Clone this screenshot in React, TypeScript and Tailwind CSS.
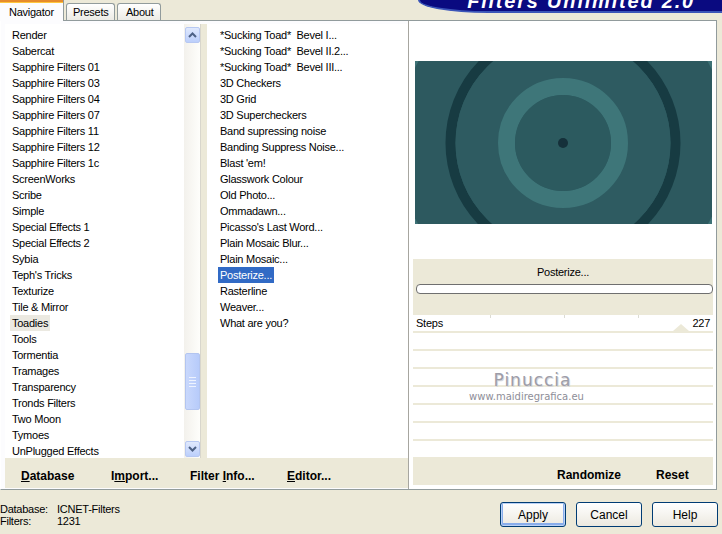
import React from "react";

const leftItems = [
  "Render",
  "Sabercat",
  "Sapphire Filters 01",
  "Sapphire Filters 03",
  "Sapphire Filters 04",
  "Sapphire Filters 07",
  "Sapphire Filters 11",
  "Sapphire Filters 12",
  "Sapphire Filters 1c",
  "ScreenWorks",
  "Scribe",
  "Simple",
  "Special Effects 1",
  "Special Effects 2",
  "Sybia",
  "Teph's Tricks",
  "Texturize",
  "Tile & Mirror",
  "Toadies",
  "Tools",
  "Tormentia",
  "Tramages",
  "Transparency",
  "Tronds Filters",
  "Two Moon",
  "Tymoes",
  "UnPlugged Effects",
];

const midItems = [
  "*Sucking Toad*  Bevel I...",
  "*Sucking Toad*  Bevel II.2...",
  "*Sucking Toad*  Bevel III...",
  "3D Checkers",
  "3D Grid",
  "3D Supercheckers",
  "Band supressing noise",
  "Banding Suppress Noise...",
  "Blast 'em!",
  "Glasswork Colour",
  "Old Photo...",
  "Ommadawn...",
  "Picasso's Last Word...",
  "Plain Mosaic Blur...",
  "Plain Mosaic...",
  "Posterize...",
  "Rasterline",
  "Weaver...",
  "What are you?",
];

function Chevron({ up }: { up: boolean }) {
  return (
    <svg width="9" height="6" viewBox="0 0 9 6">
      <path
        d={up ? "M1 5 L4.5 1.5 L8 5" : "M1 1 L4.5 4.5 L8 1"}
        fill="none"
        stroke="#4d6185"
        strokeWidth="2"
      />
    </svg>
  );
}

function ScrollBtn({ up }: { up: boolean }) {
  return (
    <div className="w-[15px] h-[16px] rounded-[2px] border border-[#b7c8f2] bg-gradient-to-b from-[#e0e9fd] to-[#bccffb] flex items-center justify-center">
      <Chevron up={up} />
    </div>
  );
}

function Preview() {
  return (
    <svg width="297" height="163" viewBox="0 0 297 163" className="block">
      <rect width="297" height="163" fill="#3e7276" />
      <circle cx="148" cy="82" r="166" fill="#2d595f" />
      <circle cx="148" cy="82" r="112.5" fill="none" stroke="#173b42" strokeWidth="10" />
      <circle cx="148" cy="82" r="107.5" fill="#2e5b61" />
      <circle cx="148" cy="82" r="56.5" fill="none" stroke="#3e7679" strokeWidth="17" />
      <circle cx="148" cy="82" r="48" fill="#2c5a5f" />
      <circle cx="148" cy="82" r="5" fill="#15303a" />
    </svg>
  );
}

export default function App() {
  const font = { fontFamily: '"Liberation Sans", Arial, sans-serif' };
  return (
    <div
      className="w-[722px] h-[534px] bg-[#ece9d8] overflow-hidden text-black text-[11px] tracking-[-0.25px] leading-[16px]"
      style={font}
    >
      {/* Tab strip */}
      <div className="h-[20px] flex items-start">
        <div className="relative z-10 w-[64px] h-[21px] bg-[#fcfcfe] border-r border-[#919b9c] flex flex-col">
          <div className="h-[2px] bg-[#e68b2c]" />
          <div className="h-[1px] bg-[#ffc73c]" />
          <div className="flex-1 flex items-center pl-[9px] pb-[1px]">Navigator</div>
        </div>
        <div className="ml-[2px] mt-[3px] w-[49px] h-[17px] rounded-t-[3px] border border-b-0 border-[#919b9c] bg-gradient-to-b from-white to-[#ecebe5] flex items-center pl-[6px]">
          Presets
        </div>
        <div className="ml-[2px] mt-[3px] w-[44px] h-[17px] rounded-t-[3px] border border-b-0 border-[#919b9c] bg-gradient-to-b from-white to-[#ecebe5] flex items-center pl-[8px]">
          About
        </div>
        <div className="ml-auto w-[304px] h-[13px] overflow-hidden rounded-bl-[70px_13px] bg-[#0a0a80] border-b-[2px] border-l-[2px] border-[#3b55b8] flex justify-end pr-[27px]">
          <span className="text-white font-bold italic text-[20px] leading-[20px] tracking-[1.8px] -mt-[9px] whitespace-nowrap">
            Filters Unlimited 2.0
          </span>
        </div>
      </div>

      {/* Tab panel */}
      <div className="w-[717px] h-[470px] border border-l-white border-t-[#919b9c] border-r-[#919b9c] border-b-[#919b9c] bg-[#fcfcfe] flex">
        {/* Left column */}
        <div className="w-[407px] flex flex-col">
          <div className="flex pt-[3px] pl-[4px] h-[437px]">
            {/* left list */}
            <div className="w-[179px] h-[434px] bg-white overflow-hidden pt-[3px] pl-[5px]">
              {leftItems.map((t) => (
                <div key={t} className="h-[16px] flex items-center whitespace-nowrap">
                  <span className={"px-[2px] h-[16px] flex items-center " + (t === "Toadies" ? "bg-[#ebe9e1]" : "")}>
                    {t}
                  </span>
                </div>
              ))}
            </div>
            {/* scrollbar */}
            <div className="w-[17px] h-[434px] bg-gradient-to-r from-[#f3f1ec] to-[#fefefb] border-r border-[#d8d6cc] flex flex-col items-center pt-[3px] pb-[1px]">
              <ScrollBtn up />
              <div className="h-[310px]" />
              <div className="w-[15px] h-[57px] rounded-[2px] border border-[#b3c5f0] bg-gradient-to-r from-[#c9d8fc] to-[#b7cbfa] flex flex-col items-center justify-center gap-[2px]">
                <div className="w-[7px] h-px bg-[#eef3fe]" />
                <div className="w-[7px] h-px bg-[#eef3fe]" />
                <div className="w-[7px] h-px bg-[#eef3fe]" />
                <div className="w-[7px] h-px bg-[#eef3fe]" />
              </div>
              <div className="flex-1" />
              <ScrollBtn up={false} />
            </div>
            {/* splitter */}
            <div className="w-[6px] h-[434px] bg-[#ece9d8]" />
            {/* middle list */}
            <div className="w-[201px] h-[434px] bg-white overflow-hidden pt-[3px] pl-[11px]">
              {midItems.map((t) => (
                <div key={t} className="h-[16px] flex items-center whitespace-pre">
                  <span
                    className={
                      "px-[2px] h-[16px] flex items-center " +
                      (t === "Posterize..." ? "bg-[#316ac5] text-white" : "")
                    }
                  >
                    {t}
                  </span>
                </div>
              ))}
            </div>
          </div>
          {/* left bottom bar */}
          <div className="ml-[4px] h-[30px] bg-[#ece9d8] flex items-center font-bold text-[12px] tracking-normal pt-[5px]">
            <span className="w-[106px] pl-[16px]">
              <span className="underline">D</span>atabase
            </span>
            <span className="w-[79px]">
              I<span className="underline">m</span>port...
            </span>
            <span className="w-[97px]">
              Filter <span className="underline">I</span>nfo...
            </span>
            <span>
              <span className="underline">E</span>ditor...
            </span>
          </div>
        </div>

        {/* Right column */}
        <div className="w-[308px] border-l border-[#a7a6a0] bg-white pl-[4px] pr-[3px] flex flex-col">
          <div className="h-[238px] pt-[40px] pl-[2px]">
            <Preview />
          </div>
          <div className="h-[56px] bg-[#ece9d8] flex flex-col items-center pt-[5px]">
            <div className="h-[16px] flex items-center">Posterize...</div>
            <div className="mt-[4px] ml-[3px] w-[297px] h-[10px] rounded-[4px] border border-[#6f6f6f] bg-white" />
          </div>
          <div className="relative h-[143px] bg-[#ece9d8] overflow-hidden">
            <div className="relative h-[16px] bg-white flex items-center justify-between px-[3px]">
              <span>Steps</span>
              <span>227</span>
              <div className="absolute top-0 left-[77px] w-px h-[3px] bg-[#dcdcd4]" />
              <div className="absolute top-0 left-[151px] w-px h-[3px] bg-[#dcdcd4]" />
              <div className="absolute top-0 left-[225px] w-px h-[3px] bg-[#dcdcd4]" />
              <div className="absolute bottom-0 left-[260px] w-0 h-0 border-l-[8px] border-r-[8px] border-b-[7px] border-l-transparent border-r-transparent border-b-[#ece9d8]" />
            </div>
            <div className="mt-[2px] h-[16px] bg-white" />
            <div className="mt-[2px] h-[16px] bg-white" />
            <div className="mt-[2px] h-[16px] bg-white" />
            <div className="mt-[2px] h-[16px] bg-white" />
            <div className="mt-[2px] h-[16px] bg-white" />
            <div className="mt-[2px] h-[16px] bg-white" />
            <div className="mt-[2px] h-[16px] bg-white" />
            <div className="absolute left-[51px] top-[56px] w-[125px] flex flex-col items-center">
              <span
                className="ml-[12px] text-[17px] leading-[19px] tracking-[1px] text-[#9d9da8]"
                style={{
                  fontFamily: '"DejaVu Sans", sans-serif',
                  textShadow: "1px 1px 0 #d8d8dc",
                }}
              >
                Pinuccia
              </span>
              <span
                className="mt-[1px] text-[10px] leading-[12px] tracking-[0px] text-[#8e8e98]"
                style={{ fontFamily: '"DejaVu Sans", sans-serif' }}
              >
                www.maidiregrafica.eu
              </span>
            </div>
          </div>
          <div className="h-[27px] bg-[#ece9d8] flex items-center font-bold text-[12px] tracking-normal pt-[6px]">
            <span className="pl-[144px] w-[243px]">Randomize</span>
            <span>Reset</span>
          </div>
        </div>
      </div>

      {/* Status area */}
      <div className="h-[44px] flex items-start">
        <div className="pt-[13px] grid grid-cols-[57px_auto] content-start leading-[12px]">
          <span>Database:</span>
          <span>ICNET-Filters</span>
          <span>Filters:</span>
          <span>1231</span>
        </div>
        <div className="ml-auto mr-[4px] mt-[12px] flex gap-[10px]">
          <div className="w-[66px] h-[25px] rounded-[3px] border border-[#003c74] bg-gradient-to-b from-white to-[#ece9e0] flex items-center justify-center shadow-[inset_0_0_0_1px_#b9d1f6,inset_0_-1px_0_2px_#89adeb] text-[12px] tracking-normal">
            Apply
          </div>
          <div className="w-[66px] h-[25px] rounded-[3px] border border-[#003c74] bg-gradient-to-b from-white to-[#ece9e0] flex items-center justify-center text-[12px] tracking-normal">
            Cancel
          </div>
          <div className="w-[66px] h-[25px] rounded-[3px] border border-[#003c74] bg-gradient-to-b from-white to-[#ece9e0] flex items-center justify-center text-[12px] tracking-normal">
            Help
          </div>
        </div>
      </div>
    </div>
  );
}
